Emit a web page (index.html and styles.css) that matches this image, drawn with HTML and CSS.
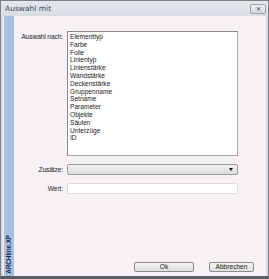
FILE: index.html
```html
<!DOCTYPE html>
<html>
<head>
<meta charset="utf-8">
<link rel="stylesheet" href="styles.css">
</head>
<body>
<div class="window">
  <div class="titlebar">
    <span class="title">Auswahl mit</span>
    <span class="close">&#x2715;</span>
  </div>
  <div class="client">
    <div class="sidebar"><span class="brand">ARCHline.XP</span></div>
    <div class="main">
      <div class="form">
        <label class="lbl lbl-top">Auswahl nach:</label>
        <div class="listbox">
          <div>Elementtyp</div>
          <div>Farbe</div>
          <div>Folie</div>
          <div>Linientyp</div>
          <div>Linienstärke</div>
          <div>Wandstärke</div>
          <div>Deckenstärke</div>
          <div>Gruppenname</div>
          <div>Setname</div>
          <div>Parameter</div>
          <div>Objekte</div>
          <div>Säulen</div>
          <div>Unterzüge</div>
          <div>ID</div>
        </div>
        <label class="lbl">Zusätze:</label>
        <div class="combo"><span class="arrow"></span></div>
        <label class="lbl">Wert:</label>
        <div class="textbox"></div>
      </div>
      <div class="buttons">
        <div class="btn btn-ok">Ok</div>
        <div class="btn btn-cancel">Abbrechen</div>
      </div>
    </div>
  </div>
</div>
</body>
</html>
```

FILE: styles.css
```css
* { box-sizing: border-box; }
html, body { margin: 0; padding: 0; }
body {
  width: 269px;
  height: 279px;
  overflow: hidden;
  font-family: "Liberation Sans", Arial, sans-serif;
  font-size: 6.6px;
  color: #1a1a1a;
  background: #fff;
}
.window {
  width: 269px;
  height: 279px;
  border: 1px solid #7c7f86;
  border-bottom: 3px solid #5a5c60;
  background: #d9dde3;
  display: flex;
  flex-direction: column;
}
.titlebar {
  height: 15px;
  flex: none;
  background: linear-gradient(#e4e7ec, #d8dde4);
  display: flex;
  align-items: center;
  justify-content: space-between;
  padding: 0 2px 0 4px;
}
.title {
  font-family: "DejaVu Sans", sans-serif;
  font-size: 7.5px;
  color: #3d4a5c;
}
.close {
  width: 16px;
  height: 10px;
  border: 1px solid #9ea3aa;
  border-radius: 2px;
  background: linear-gradient(#eef0f3, #d4d8de);
  font-size: 6px;
  line-height: 8px;
  text-align: center;
  color: #6a6f78;
  font-weight: bold;
}
.client {
  flex: 1;
  display: flex;
  margin: 0 2px 0 2px;
  background: #f5f1f5;
}
.sidebar {
  width: 10px;
  margin-left: 1px;
  background: #a7c1e1;
  display: flex;
  align-items: flex-end;
  justify-content: center;
  padding-bottom: 2px;
}
.brand {
  writing-mode: vertical-rl;
  transform: rotate(180deg);
  font-weight: bold;
  font-size: 6.4px;
  color: #1c2a4a;
  letter-spacing: -0.1px;
  line-height: 8px;
}
.main {
  flex: 1;
  display: flex;
  flex-direction: column;
  justify-content: space-between;
  padding: 15px 0 4px 0;
}
.form {
  display: grid;
  grid-template-columns: 49px 171px;
  column-gap: 4px;
  row-gap: 8px;
  align-items: center;
}
.lbl {
  text-align: right;
  white-space: nowrap;
  color: #222;
  letter-spacing: -0.1px;
}
.lbl-top {
  align-self: start;
  padding-top: 2px;
}
.listbox {
  height: 125px;
  background: #fff;
  border: 1px solid #a6a6a6;
  border-top-color: #8a8a8a;
  border-left-color: #8a8a8a;
  padding: 1px 2px;
  line-height: 7.8px;
}
.combo {
  position: relative;
  height: 11px;
  border: 1px solid #9a9a9a;
  border-radius: 2px;
  background: linear-gradient(#f3f3f3, #dadada);
}
.arrow {
  position: absolute;
  right: 4px;
  top: 3px;
  width: 0;
  height: 0;
  border-left: 2.5px solid transparent;
  border-right: 2.5px solid transparent;
  border-top: 3px solid #111;
}
.textbox {
  height: 11px;
  background: #fff;
  border: 1px solid #dcdcdc;
}
.buttons {
  display: flex;
  justify-content: flex-end;
  gap: 15px;
  padding-right: 12px;
}
.btn {
  height: 10px;
  border: 1px solid #8c8c8c;
  border-radius: 2px;
  background: linear-gradient(#f6f6f6, #dcdcdc);
  line-height: 8px;
  text-align: center;
  color: #1a1a1a;
}
.btn-ok { width: 60px; }
.btn-cancel { width: 45px; }
```
